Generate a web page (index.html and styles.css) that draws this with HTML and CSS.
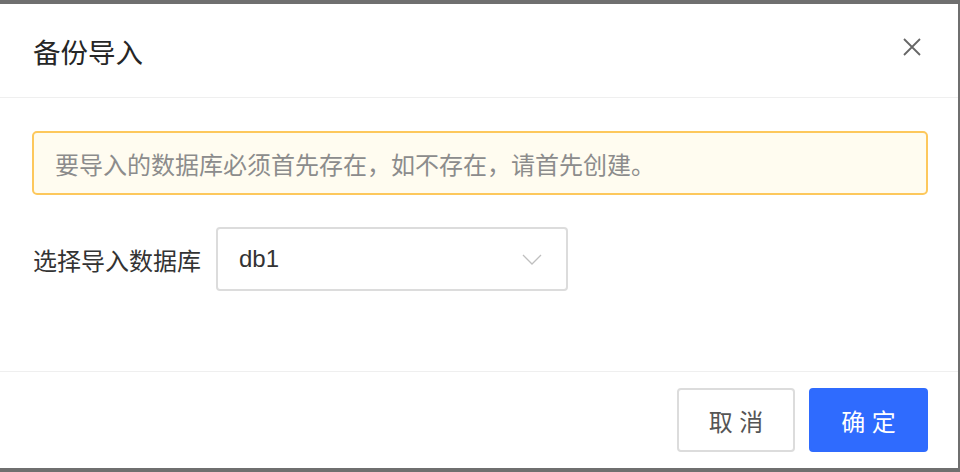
FILE: index.html
```html
<!DOCTYPE html>
<html lang="zh-CN">
<head>
  <meta charset="UTF-8">
  <meta name="viewport" content="width=device-width, initial-scale=1.0">
  <title>备份导入</title>
  <link rel="stylesheet" href="styles.css">
</head>
<body>
  <div class="modal">
    <div class="modal-header">
      <h2 class="modal-title">备份导入</h2>
      <button class="modal-close" aria-label="关闭">
        <svg width="20" height="20" viewBox="0 0 20 20">
          <path d="M2 2 L18 18 M18 2 L2 18" stroke="#666" stroke-width="1.8" fill="none"/>
        </svg>
      </button>
    </div>

    <div class="modal-body">
      <!-- 提示 -->
      <div class="alert">要导入的数据库必须首先存在，如不存在，请首先创建。</div>

      <div class="form-row">
        <label class="form-label">选择导入数据库</label>
        <div class="select">
          <span class="select-value">db1</span>
          <svg class="select-arrow" width="20" height="11" viewBox="0 0 20 11">
            <path d="M1 1 L10 10 L19 1" stroke="#bfbfbf" stroke-width="1.3" fill="none"/>
          </svg>
        </div>
      </div>
    </div>

    <div class="modal-footer">
      <button class="btn">取 消</button>
      <button class="btn btn-primary">确 定</button>
    </div>
  </div>
</body>
</html>
```

FILE: styles.css
```css
body {
  margin: 0;
  padding: 4px 2px 4px 0;
  background: #6f6f6f;
  font-family: "Liberation Sans", "Noto Sans CJK SC", sans-serif;
  color: #333;
}
.modal {
  width: 958px;
  height: 464px;
  background: #fff;
  display: flex;
  flex-direction: column;
}
.modal-header {
  height: 93px;
  border-bottom: 1px solid #efefef;
  display: flex;
  align-items: center;
  justify-content: space-between;
  padding: 0 36px 0 33px;
}
.modal-title {
  margin: 0;
  font-size: 27.5px;
  font-weight: normal;
  color: #262626;
}
.modal-close {
  background: none;
  border: none;
  padding: 0;
  display: flex;
  margin-top: -8px;
  cursor: pointer;
}
.modal-body {
  flex: 1;
  padding: 33px 30px 0 32px;
}
.alert {
  height: 60px;
  border: 2px solid #fdc85c;
  border-radius: 5px;
  background: #fffcf0;
  color: #8c8c8c;
  font-size: 24px;
  display: flex;
  align-items: center;
  padding-left: 21px;
}
.form-row {
  display: flex;
  align-items: center;
  margin-top: 32px;
}
.form-label {
  font-size: 24px;
  color: #333;
  width: 183px;
  padding-left: 1px;
}
.select {
  width: 352px;
  height: 64px;
  box-sizing: border-box;
  border: 2px solid #dcdcdc;
  border-radius: 4px;
  display: flex;
  align-items: center;
  justify-content: space-between;
  padding: 0 24px 0 21px;
}
.select-value {
  font-size: 24px;
  color: #333;
}
.modal-footer {
  height: 96px;
  border-top: 1px solid #efefef;
  display: flex;
  justify-content: flex-end;
  align-items: center;
  gap: 14px;
  padding-right: 30px;
}
.btn {
  width: 118px;
  height: 64px;
  font-family: inherit;
  font-size: 24px;
  background: #fff;
  border: 2px solid #dcdcdc;
  border-radius: 4px;
  color: #555;
  cursor: pointer;
}
.btn-primary {
  width: 119px;
  background: #2f6bfe;
  border-color: #2f6bfe;
  color: #fff;
}
```
